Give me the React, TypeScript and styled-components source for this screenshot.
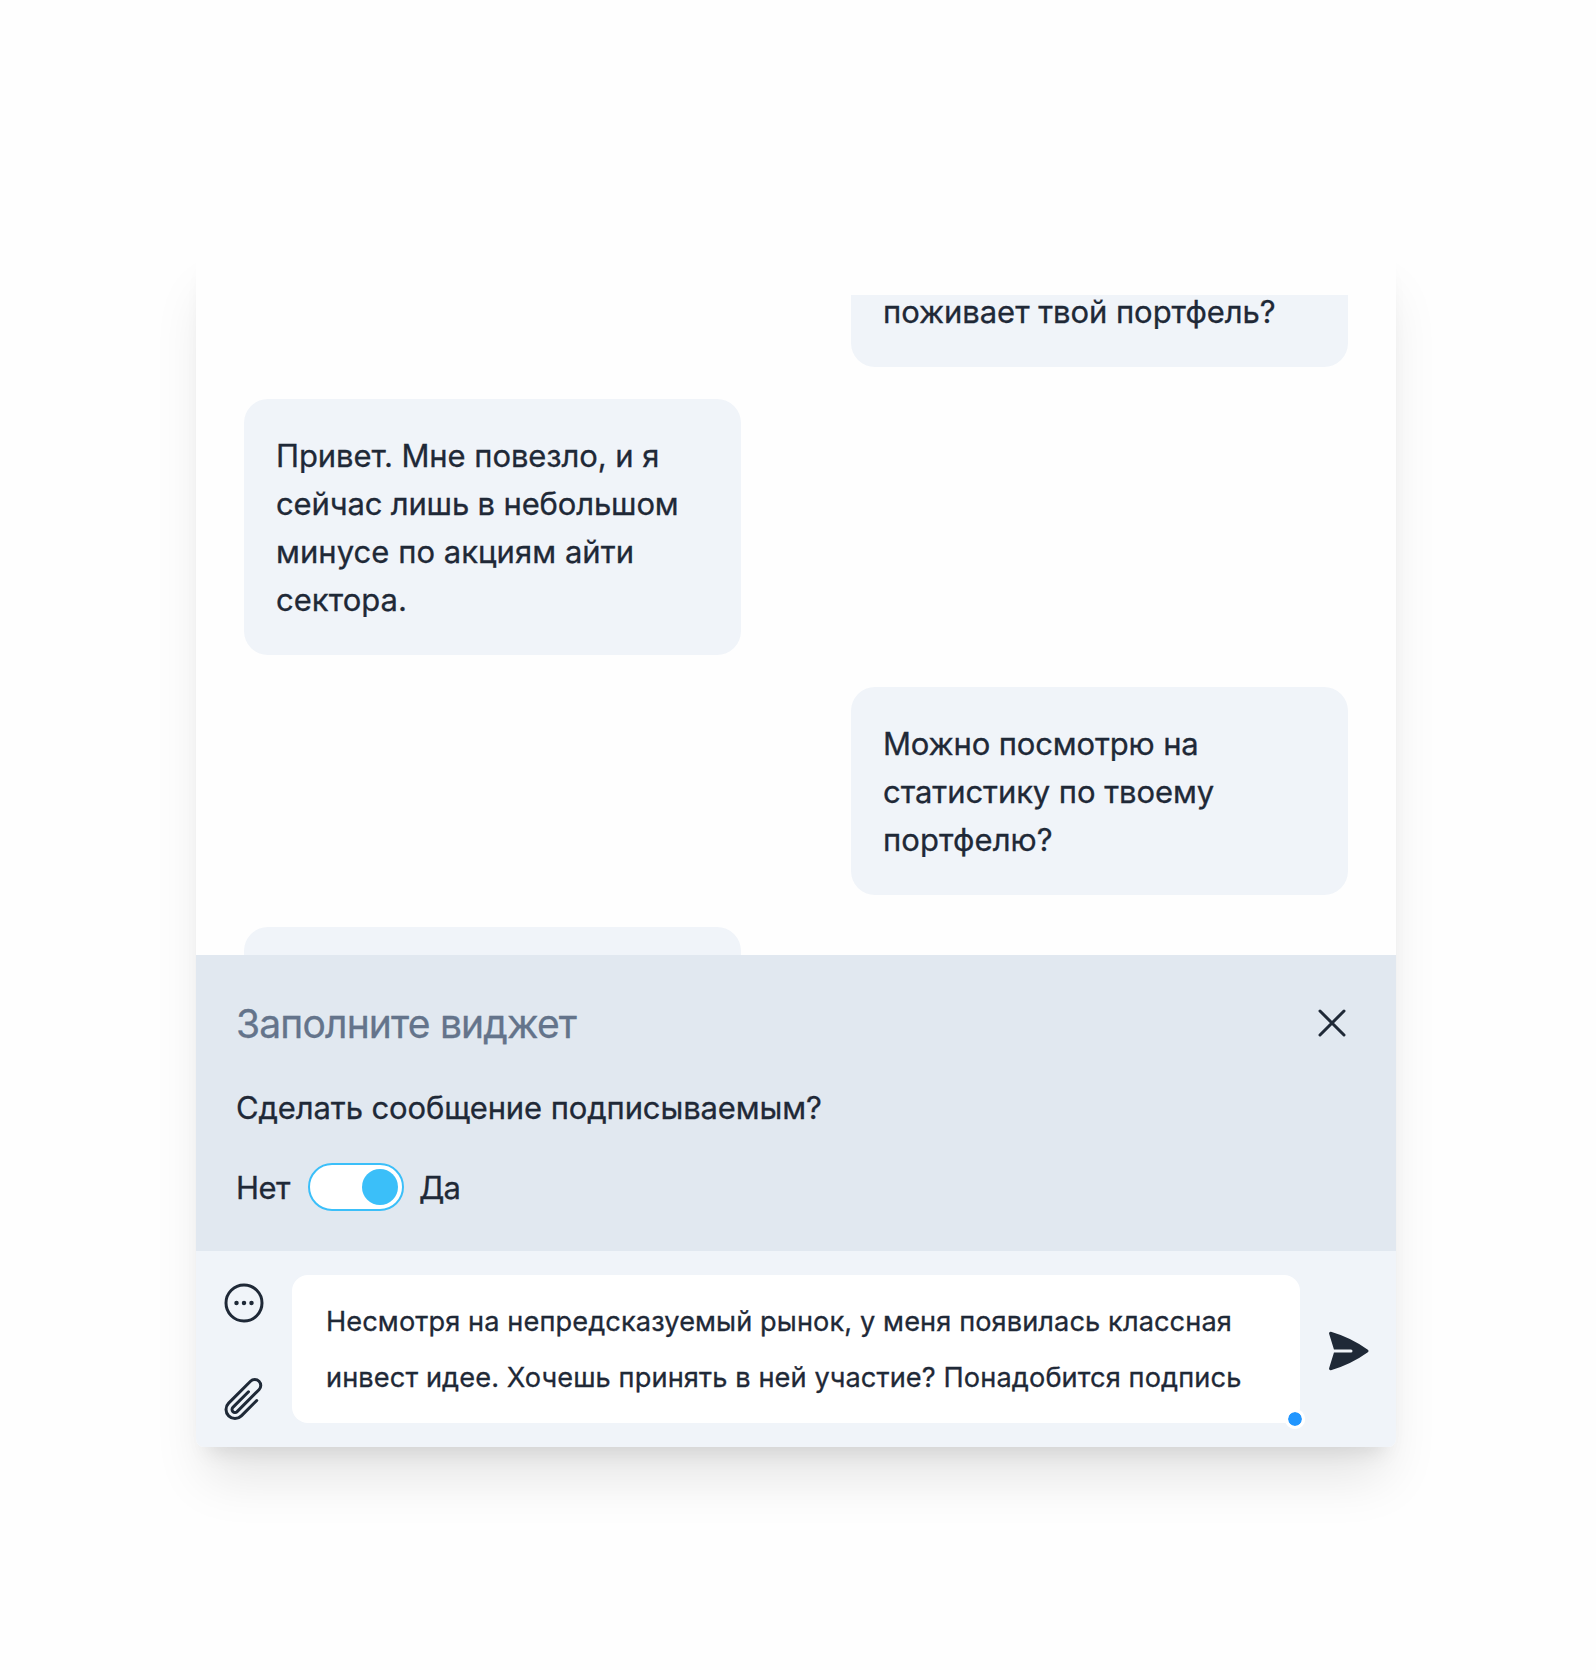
import React from 'react';
import styled, { createGlobalStyle } from 'styled-components';
import {
  HiOutlineEllipsisHorizontalCircle,
  HiOutlinePaperClip,
  HiOutlineXMark,
  HiPaperAirplane,
} from 'react-icons/hi2';

const GlobalStyle = createGlobalStyle`
  *, *::before, *::after { box-sizing: border-box; }
  body {
    margin: 0;
    background: #fefefe;
    color: #1f2937;
    font-family: Inter, "Liberation Sans", sans-serif;
    -webkit-text-stroke: 0.3px currentColor;
  }
`;

const Page = styled.main`
  height: 1670px;
  padding: 247px 0 0 196px;
`;

const Card = styled.section`
  display: flex;
  flex-direction: column;
  width: 1200px;
  height: 1200px;
  padding-top: 48px;
  background: #fefefe;
  border-radius: 8px;
  box-shadow: 0 40px 50px -10px rgba(0, 0, 0, 0.1), 0 16px 20px -12px rgba(0, 0, 0, 0.1);
`;

const Messages = styled.div`
  flex: 1;
  min-height: 0;
  display: flex;
  flex-direction: column;
  justify-content: flex-end;
  gap: 32px;
  padding: 0 48px;
  overflow: hidden;
`;

const Bubble = styled.div<{ $mine?: boolean }>`
  flex: none;
  align-self: ${(p) => (p.$mine ? 'flex-end' : 'flex-start')};
  width: 497px;
  padding: 32px;
  border-radius: 24px;
  background: #f0f4f9;
  font-size: 31px;
  line-height: 48px;
`;

const NextBubble = styled(Bubble)`
  height: 112px;
  margin-bottom: -84px;
`;

const Line = styled.span<{ $spacing?: number }>`
  display: block;
  white-space: nowrap;
  letter-spacing: ${(p) => p.$spacing ?? 0}px;
`;

const BubbleText = styled(Line)`
  padding-top: 1px;
  margin-bottom: -1px;
`;

const Widget = styled.div`
  flex: none;
  display: flex;
  flex-direction: column;
  gap: 32px;
  height: 296px;
  padding: 40px;
  background: #e1e8f0;
  font-size: 31px;
  line-height: 48px;
`;

const WidgetHeader = styled.div`
  display: flex;
  align-items: center;
  justify-content: space-between;
  height: 56px;
`;

const Title = styled.h2`
  margin: 0;
  padding-top: 2px;
  color: #64748b;
  font-size: 39px;
  font-weight: 400;
  line-height: 56px;
  letter-spacing: -0.82px;
`;

const SwitchRow = styled.div`
  display: flex;
  align-items: center;
`;

const OffLabel = styled(BubbleText)`
  width: 72px;
`;

const OnLabel = styled(BubbleText)`
  padding-left: 15px;
`;

const IconButton = styled.button`
  flex: none;
  display: flex;
  padding: 0;
  border: 0;
  background: none;
  color: inherit;
`;

const SendButton = styled(IconButton)`
  padding-top: 4px;
`;

const Switch = styled.button`
  display: flex;
  align-items: center;
  justify-content: flex-end;
  width: 96px;
  height: 48px;
  padding: 0 4px;
  border: 2px solid #3bbff9;
  border-radius: 24px;
  background: #fff;
`;

const Knob = styled.span`
  width: 36px;
  height: 36px;
  border-radius: 50%;
  background: #3bbff9;
`;

const Composer = styled.div`
  flex: none;
  display: flex;
  align-items: center;
  gap: 24px;
  height: 196px;
  padding: 24px;
  background: #f0f4f9;
  border-radius: 0 0 8px 8px;
`;

const Tools = styled.div`
  display: flex;
  flex-direction: column;
  justify-content: space-between;
  height: 100%;
  padding-top: 4px;
`;

const Input = styled.div`
  position: relative;
  flex: 1;
  height: 148px;
  padding: 19px 34px 17px;
  border-radius: 16px;
  background: #fff;
  font-size: 27.2px;
  line-height: 56px;
`;

const ResizeHandle = styled.span`
  position: absolute;
  right: -5px;
  bottom: -6px;
  width: 20px;
  height: 20px;
  border: 3px solid #fff;
  border-radius: 50%;
  background: #2196ff;
  background-clip: padding-box;
  box-shadow: 0 0 1px #fff;
`;

type TextLine = { text: string; spacing: number };
type Message = { mine?: boolean; lines: TextLine[] };

const messages: Message[] = [
  { mine: true, lines: [{ text: 'поживает твой портфель?', spacing: -0.06 }] },
  {
    lines: [
      { text: 'Привет. Мне повезло, и я', spacing: -0.08 },
      { text: 'сейчас лишь в небольшом', spacing: -0.16 },
      { text: 'минусе по акциям айти', spacing: 0.04 },
      { text: 'сектора.', spacing: 0.03 },
    ],
  },
  {
    mine: true,
    lines: [
      { text: 'Можно посмотрю на', spacing: -0.15 },
      { text: 'статистику по твоему', spacing: -0.08 },
      { text: 'портфелю?', spacing: 0.08 },
    ],
  },
];

const draft: TextLine[] = [
  { text: 'Несмотря на непредсказуемый рынок, у меня появилась классная', spacing: 0.09 },
  { text: 'инвест идее. Хочешь принять в ней участие? Понадобится подпись', spacing: 0.1 },
];

export default function App() {
  return (
    <>
      <GlobalStyle />
      <Page>
        <Card>
          <Messages>
            {messages.map((message) => (
              <Bubble key={message.lines[0].text} $mine={message.mine}>
                {message.lines.map((line) => (
                  <BubbleText key={line.text} $spacing={line.spacing}>
                    {line.text}
                  </BubbleText>
                ))}
              </Bubble>
            ))}
            <NextBubble />
          </Messages>
          <Widget>
            <WidgetHeader>
              <Title>Заполните виджет</Title>
              <IconButton aria-label="Закрыть">
                <HiOutlineXMark size={48} />
              </IconButton>
            </WidgetHeader>
            <BubbleText $spacing={-0.12}>Сделать сообщение подписываемым?</BubbleText>
            <SwitchRow>
              <OffLabel $spacing={-0.5}>Нет</OffLabel>
              <Switch role="switch" aria-checked="true">
                <Knob />
              </Switch>
              <OnLabel $spacing={-0.8}>Да</OnLabel>
            </SwitchRow>
          </Widget>
          <Composer>
            <Tools>
              <IconButton aria-label="Виджеты">
                <HiOutlineEllipsisHorizontalCircle size={48} />
              </IconButton>
              <IconButton aria-label="Прикрепить">
                <HiOutlinePaperClip size={48} />
              </IconButton>
            </Tools>
            <Input>
              {draft.map((line) => (
                <Line key={line.text} $spacing={line.spacing}>
                  {line.text}
                </Line>
              ))}
              <ResizeHandle />
            </Input>
            <SendButton aria-label="Отправить">
              <HiPaperAirplane size={48} />
            </SendButton>
          </Composer>
        </Card>
      </Page>
    </>
  );
}
